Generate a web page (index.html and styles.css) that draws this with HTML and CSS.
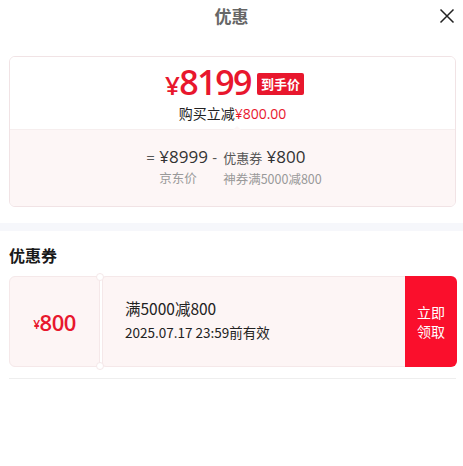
FILE: index.html
```html
<!DOCTYPE html>
<html lang="zh-CN">
<head>
    <meta charset="UTF-8">
    <meta name="viewport" content="width=device-width, initial-scale=1.0">
    <title>优惠</title>
    <link rel="stylesheet" href="styles.css">
</head>
<body>
    <div id="popup">
        <div class="header">
            <span class="title">优惠</span>
            <svg class="close" width="16" height="16" viewBox="0 0 16 16">
                <path d="M1.5 1.5 L14.5 14.5 M14.5 1.5 L1.5 14.5" stroke="#222" stroke-width="1.5" fill="none"/>
            </svg>
        </div>

        <div class="price-card">
            <div class="price-top">
                <div class="final-row">
                    <span class="final-price"><span class="yen">¥</span>8199</span>
                    <span class="tag">到手价</span>
                </div>
                <div class="save">购买立减<span class="red">¥800.00</span></div>
            </div>
            <div class="price-bottom">
                <div class="formula">
                    <div class="col">
                        <div class="val"><span class="op">=</span> ¥8999 <span class="op">-</span></div>
                        <div class="lbl lbl-first">京东价</div>
                    </div>
                    <div class="col">
                        <div class="val"><span class="small">优惠券</span> ¥800</div>
                        <div class="lbl">神券满5000减800</div>
                    </div>
                </div>
            </div>
        </div>

        <div class="divider"></div>

        <h3>优惠券</h3>
        <div class="coupon">
            <div class="coupon-left"><span class="yen">¥</span>800</div>
            <div class="coupon-mid">
                <div class="coupon-name">满5000减800</div>
                <div class="coupon-date">2025.07.17 23:59前有效</div>
            </div>
            <div class="coupon-btn">立即<br>领取</div>
        </div>
        <div class="line"></div>
    </div>
</body>
</html>
```

FILE: styles.css
```css
body {
    font-family: "Noto Sans CJK SC", "Noto Sans", sans-serif;
    background-color: #fff;
    margin: 0;
    padding: 0;
    color: #222;
}

#popup {
    width: 463px;
}

.header {
    height: 30px;
    display: flex;
    justify-content: center;
    align-items: center;
    position: relative;
}

.title {
    font-size: 17px;
    font-weight: bold;
    color: #666;
}

.close {
    position: absolute;
    right: 8px;
    top: 8px;
}

.price-card {
    margin: 26px 7px 0 9px;
    border: 1px solid #f1e3e5;
    border-radius: 6px;
    overflow: hidden;
}

.price-top {
    background-color: #fff;
    height: 72px;
    display: flex;
    flex-direction: column;
    align-items: center;
    border-bottom: 1px solid #f6eeee;
    position: relative;
}

.price-top::after {
    content: "";
    position: absolute;
    bottom: -1px;
    left: 223px;
    width: 8px;
    height: 4px;
    background: #fdf6f6;
    clip-path: polygon(50% 0, 100% 100%, 0 100%);
}

.final-row {
    display: flex;
    align-items: center;
    margin-top: 9px;
    height: 34px;
    margin-left: 4px;
}

.final-price {
    font-family: "Open Sans", sans-serif;
    color: #e8172d;
    font-size: 34px;
    font-weight: 600;
    letter-spacing: -1.5px;
    line-height: 34px;
}

.final-price .yen {
    font-size: 26px;
    margin-right: 1px;
}

.tag {
    background-color: #e8172d;
    color: #fff;
    font-size: 13px;
    font-weight: bold;
    padding: 2px 4px;
    line-height: 18px;
    border-radius: 2px;
    margin-left: 6px;
    margin-top: 1px;
}

.save {
    font-size: 14px;
    color: #222;
    line-height: 20px;
    margin-top: 3px;
}

.red {
    color: #e8172d;
    font-family: "Open Sans", sans-serif;
}

.price-bottom {
    background-color: #fdf6f6;
    height: 76px;
    display: flex;
    justify-content: center;
}

.formula {
    display: flex;
    margin-top: 15px;
    margin-left: 3px;
}

.col {
    display: flex;
    flex-direction: column;
}

.val {
    font-family: "Open Sans", "Noto Sans CJK SC", sans-serif;
    font-size: 17px;
    color: #333;
    line-height: 24px;
    white-space: pre;
}

.op {
    color: #555;
    font-size: 15px;
}

.small {
    font-family: "Noto Sans CJK SC", sans-serif;
    font-size: 13px;
    color: #555;
}

.lbl {
    font-size: 12.5px;
    color: #999;
    line-height: 17px;
}

.lbl-first {
    padding-left: 13px;
}

.col + .col {
    margin-left: 6px;
}

.divider {
    height: 8px;
    background-color: #f6f7fb;
    margin-top: 16px;
}

h3 {
    margin: 14px 0 0 9px;
    font-size: 16px;
    line-height: 20px;
    color: #1a1a1a;
}

.coupon {
    display: flex;
    margin: 11px 6px 0 9px;
    height: 91px;
}

.coupon-left {
    width: 89px;
    background-color: #fdf5f5;
    border: 1px solid #f5e8e9;
    border-radius: 6px 0 0 6px;
    display: flex;
    justify-content: center;
    align-items: center;
    color: #e8172d;
    font-family: "Open Sans", sans-serif;
    font-size: 22px;
    font-weight: 600;
    letter-spacing: -0.5px;
    position: relative;
}

.coupon-left .yen {
    font-size: 12px;
    margin-top: 5px;
}

.coupon-left::after,
.coupon-left::before {
    content: "";
    position: absolute;
    right: -5px;
    width: 6px;
    height: 6px;
    border-radius: 50%;
    background: #fff;
    border: 1px solid #f5e8e9;
    z-index: 1;
}

.coupon-left::after {
    top: -4px;
}

.coupon-left::before {
    bottom: -4px;
}

.coupon-mid {
    flex: 1;
    background-color: #fdf5f5;
    border: 1px solid #f5e8e9;
    border-right: none;
    border-radius: 4px 0 0 4px;
    margin-left: 2px;
    padding-left: 22px;
    padding-bottom: 4px;
    display: flex;
    flex-direction: column;
    justify-content: center;
}

.coupon-name {
    font-size: 15.5px;
    line-height: 22px;
    color: #222;
}

.coupon-date {
    font-size: 13.5px;
    line-height: 20px;
    color: #222;
    margin-top: 3px;
}

.coupon-btn {
    width: 52px;
    background-color: #fa0f2c;
    color: #fff;
    font-size: 14px;
    line-height: 19px;
    border-radius: 0 6px 6px 0;
    display: flex;
    align-items: center;
    justify-content: center;
    text-align: center;
}

.line {
    height: 1px;
    background-color: #eeeeee;
    margin: 11px 7px 0 9px;
}
```
